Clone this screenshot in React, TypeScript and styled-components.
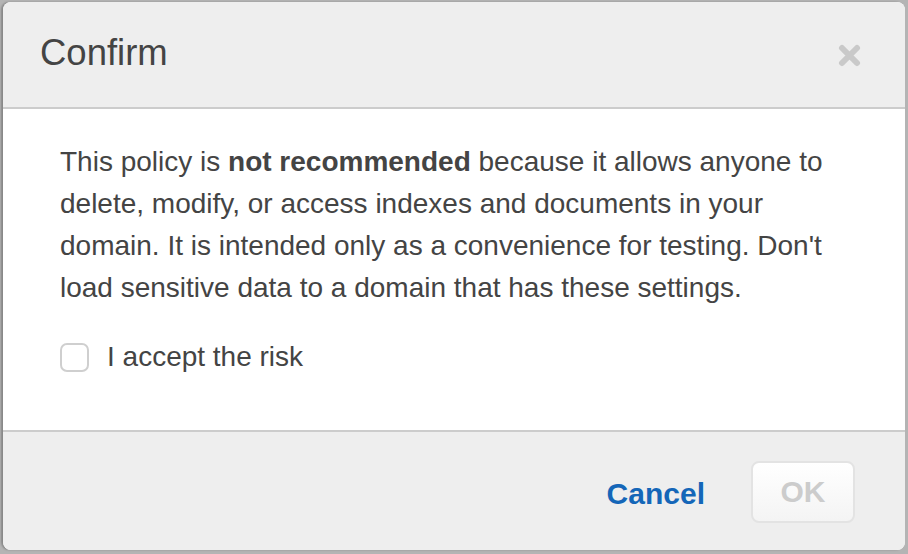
import styled, { createGlobalStyle } from "styled-components";

const GlobalStyle = createGlobalStyle`
  html, body {
    margin: 0;
    padding: 0;
    background: #b4b4b4;
    font-family: "Liberation Sans", Arial, Helvetica, sans-serif;
  }
`;

export default function App() {
  return (
    <>
      <GlobalStyle />
      <Modal>
        <Header>
          <Title>Confirm</Title>
          <CloseButton aria-label="Close">
            <svg width="23" height="23" viewBox="0 0 23 23">
              <path d="M4 4 L19 19 M19 4 L4 19" stroke="#c9c9c9" strokeWidth="6" strokeLinecap="round" />
            </svg>
          </CloseButton>
        </Header>
        <Body>
          <Message>
            This policy is <Strong>not recommended</Strong> because it allows anyone to delete, modify, or
            access indexes and documents in your domain. It is intended only as a convenience for testing.
            Don't load sensitive data to a domain that has these settings.
          </Message>
          <CheckRow>
            <CheckBox type="checkbox" />
            <span>I accept the risk</span>
          </CheckRow>
        </Body>
        <Footer>
          <LinkButton>Cancel</LinkButton>
          <OkButton disabled>OK</OkButton>
        </Footer>
      </Modal>
    </>
  );
}

const Modal = styled.div`
  margin: 2px 3px;
  width: 902px;
  height: 548px;
  box-sizing: border-box;
  border-radius: 8px;
  overflow: hidden;
  background: #fff;
  display: flex;
  flex-direction: column;
  box-shadow: -2px 0 2px rgba(0, 0, 0, 0.25);
`;

const Header = styled.div`
  height: 107px;
  box-sizing: border-box;
  background: #eeeeee;
  border-bottom: 2px solid #cccccc;
  display: flex;
  align-items: flex-start;
  justify-content: space-between;
  padding: 33px 44px 0 37px;
`;

const Title = styled.h1`
  margin: 0;
  font-size: 36.5px;
  line-height: 36px;
  font-weight: normal;
  color: #444;
`;

const CloseButton = styled.button`
  border: none;
  background: none;
  padding: 0;
  margin-top: 9px;
  display: flex;
  cursor: pointer;
`;

const Body = styled.div`
  flex: 1;
  padding: 32px 43px 0 57px;
  color: #444;
  font-size: 28px;
  line-height: 42px;
`;

const Message = styled.p`
  margin: 0;
`;

const Strong = styled.strong`
  font-weight: bold;
`;

const CheckRow = styled.label`
  margin-top: 27px;
  display: flex;
  align-items: center;
  gap: 18px;
`;

const CheckBox = styled.input`
  appearance: none;
  margin: 0;
  width: 29px;
  height: 29px;
  box-sizing: border-box;
  border: 2px solid #cfcfcf;
  border-radius: 7px;
  background: #fff;
`;

const Footer = styled.div`
  height: 120px;
  box-sizing: border-box;
  background: #eeeeee;
  border-top: 2px solid #cccccc;
  display: flex;
  align-items: center;
  justify-content: flex-end;
  gap: 46px;
  padding: 2px 50px 0 0;
`;

const LinkButton = styled.button`
  border: none;
  background: none;
  padding: 4px 0 0;
  font-family: inherit;
  font-size: 30px;
  font-weight: bold;
  color: #1466b8;
  cursor: pointer;
`;

const OkButton = styled.button`
  width: 104px;
  height: 62px;
  box-sizing: border-box;
  border: 2px solid #e3e3e3;
  border-radius: 8px;
  background: linear-gradient(#ffffff, #f4f4f4);
  font-family: inherit;
  font-size: 30px;
  font-weight: bold;
  color: #cccccc;
`;
